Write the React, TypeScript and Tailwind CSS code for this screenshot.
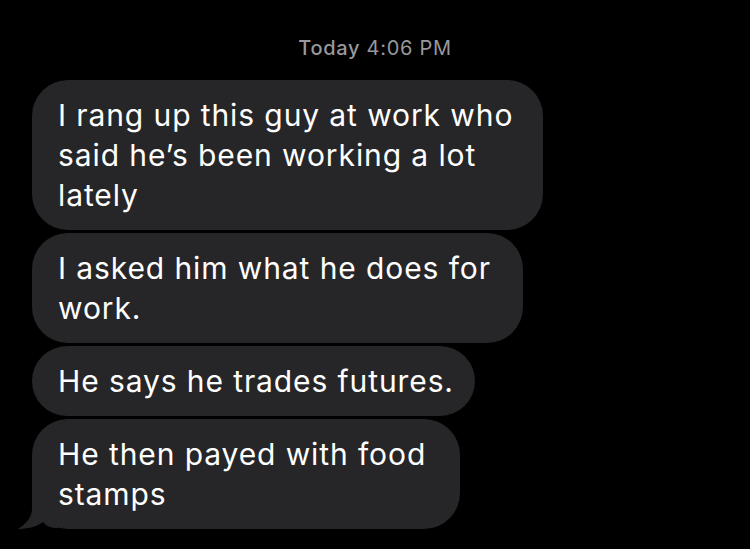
import React from 'react';

const messages = [
  { lines: ['I rang up this guy at work who', 'said he’s been working a lot', 'lately'], width: 'w-[511px]' },
  { lines: ['I asked him what he does for', 'work.'], width: 'w-[491px]' },
  { lines: ['He says he trades futures.'], width: 'w-[443px]' },
  { lines: ['He then payed with food', 'stamps'], width: 'w-[428px]' },
];

const App = () => {
  return (
    <div className="w-[750px] h-[549px] bg-black overflow-hidden font-['Inter','Liberation_Sans',sans-serif]">
      <div className="pt-[36px] text-center text-[20px] leading-[24px] tracking-[0.7px] text-[#98989d]">
        <span className="font-medium">Today</span> 4:06 PM
      </div>

      <div className="mt-[20px] pl-[32px] flex flex-col gap-[3px]">
        {messages.map((m, i) => (
          <div
            key={i}
            className={`relative ${m.width} rounded-[36px] bg-[#262628] pl-[26px] pr-4 py-[15px] text-[30px] leading-[40px] text-white tracking-[0.9px]`}
          >
            {m.lines.map((l, j) => (
              <div key={j} className="whitespace-nowrap">{l}</div>
            ))}
            {/* tail on the last bubble */}
            {i === messages.length - 1 && (
              <svg
                className="absolute left-[-14px] bottom-[-2px]"
                width="40"
                height="40"
                viewBox="0 0 40 40"
              >
                <path
                  d="M14 0 H40 V37 C33 37 28 35 25 31 C18 36 9 38 0 38 C8 33 14 26 14 18 Z"
                  fill="#262628"
                />
              </svg>
            )}
          </div>
        ))}
      </div>
    </div>
  );
};

export default App;
